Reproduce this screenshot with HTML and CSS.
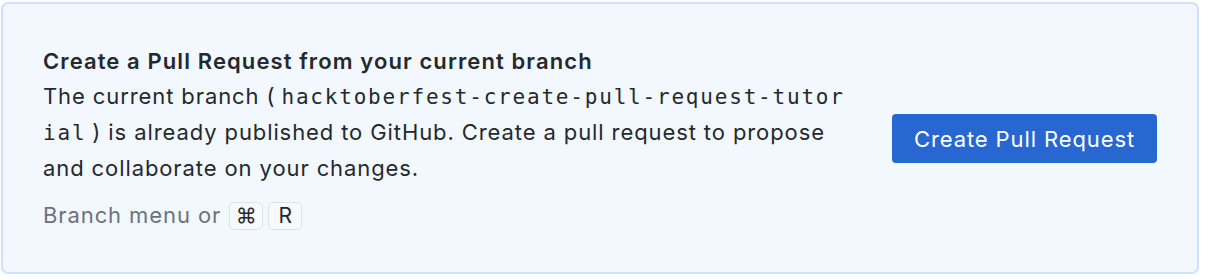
FILE: index.html
```html
<!DOCTYPE html>
<html>
<head>
<meta charset="utf-8">
<link rel="stylesheet" href="styles.css">
</head>
<body>
<div class="page">
  <section class="callout">
    <div class="text">
      <h2 class="title">Create a Pull Request from your current branch</h2>
      <p class="desc">The current branch (<code class="branch">hacktoberfest-create-pull-request-tutorial</code>) is already published to GitHub. Create a pull request to propose and collaborate on your changes.</p>
      <p class="hint">Branch menu or <kbd class="key">⌘</kbd> <kbd class="key">R</kbd></p>
    </div>
    <button class="btn">Create Pull Request</button>
  </section>
</div>
</body>
</html>
```
FILE: styles.css
```css
html, body {
  margin: 0;
  padding: 0;
  background: #ffffff;
}
.page {
  padding: 2px 9px 6px 1px;
  font-family: Inter, "Noto Sans", sans-serif;
  color: #24292e;
}
.callout {
  box-sizing: border-box;
  height: 272px;
  border: 2px solid #cfe1fb;
  border-radius: 7px;
  background: #f3f8ff;
  padding: 0 40px;
  display: flex;
  align-items: center;
  justify-content: space-between;
}
.text {
  width: 814px;
  padding-top: 1px;
}
.title {
  margin: 0;
  font-size: 22px;
  font-weight: 600;
  letter-spacing: 1.1px;
  line-height: 35px;
}
.desc {
  margin: 0;
  font-size: 22px;
  letter-spacing: 0.9px;
  line-height: 35px;
}
.branch {
  font-family: "DejaVu Sans Mono", monospace;
  font-size: 21px;
  letter-spacing: 1.8px;
  padding: 0 6px 0 6px;
  word-break: break-all;
}
.hint {
  margin: 12px 0 0;
  font-size: 22px;
  letter-spacing: 0.9px;
  line-height: 35px;
  color: #6a737d;
  display: flex;
  align-items: center;
  gap: 5px;
}
.key {
  font-family: Inter, "Noto Sans", sans-serif;
  font-size: 21px;
  letter-spacing: 0;
  color: #24292e;
  border: 1.5px solid #dfe3e8;
  border-radius: 5px;
  background: #f6f9fd;
  width: 34px;
  height: 28px;
  box-sizing: border-box;
  display: inline-flex;
  align-items: center;
  justify-content: center;
}
.hint .key:first-of-type { margin-left: 3px; }
.btn {
  font-family: Inter, "Noto Sans", sans-serif;
  font-size: 22px;
  letter-spacing: 0.9px;
  color: #ffffff;
  background: #2867d1;
  border: none;
  border-radius: 4px;
  width: 265px;
  height: 49px;
  padding: 0;
  margin-top: 1px;
}
```
